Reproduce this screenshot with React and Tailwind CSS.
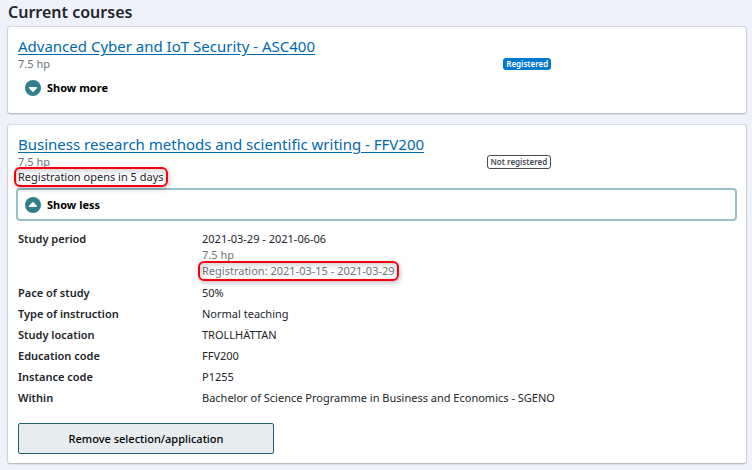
import { useState } from "react";

const courses = [
  {
    name: "Advanced Cyber and IoT Security - ASC400",
    credits: "7.5 hp",
    registered: true,
  },
  {
    name: "Business research methods and scientific writing - FFV200",
    credits: "7.5 hp",
    registered: false,
    notice: "Registration opens in 5 days",
    open: true,
    period: "2021-03-29 - 2021-06-06",
    registration: "Registration: 2021-03-15 - 2021-03-29",
    details: [
      ["Pace of study", "50%"],
      ["Type of instruction", "Normal teaching"],
      ["Study location", "TROLLHÄTTAN"],
      ["Education code", "FFV200"],
      ["Instance code", "P1255"],
      ["Within", "Bachelor of Science Programme in Business and Economics - SGENO"],
    ],
  },
];

function Highlight({ children }) {
  return (
    <span className="relative block w-fit">
      {children}
      <span className="absolute -inset-x-1 -inset-y-0.5 rounded-md border-2 border-[#f5000f] shadow-[1px_2px_5px_rgba(0,0,0,0.25),inset_1px_2px_6px_rgba(0,0,0,0.2)]" />
    </span>
  );
}

function ToggleIcon({ open }) {
  return (
    <svg className="size-4" viewBox="0 0 16 16" aria-hidden="true">
      <circle cx="8" cy="8" r="8" fill="#2f7f8d" />
      <path
        d={open ? "M8 4.8 12.2 9Q12.2 10 11.2 10H4.8Q3.8 10 3.8 9Z" : "M8 12.2 3.8 8Q3.8 7 4.8 7H11.2Q12.2 7 12.2 8Z"}
        fill="#fff"
      />
    </svg>
  );
}

function StatusBadge({ registered }) {
  return registered ? (
    <span className="rounded-[3px] bg-[#007acc] px-[3px] text-[8px] leading-3 font-semibold text-white">
      Registered
    </span>
  ) : (
    <span className="rounded-[3px] border border-[#454b54] px-[3px] text-[8px] leading-3 font-semibold text-[#454b54]">
      Not registered
    </span>
  );
}

function CourseCard({ course }) {
  const [open, setOpen] = useState(Boolean(course.open));

  return (
    <article className="rounded-xs bg-white pt-[9px] pr-[9px] pb-[9px] pl-2 shadow-[0_0_1px_1px_rgba(0,0,0,0.1),0_1px_2px_rgba(0,0,0,0.2)]">
      <div className="pl-0.5">
        <h2 className="text-[15px] leading-5">
          <a href="#" className="text-[#0069b0] underline underline-offset-2">
            {course.name}
          </a>
        </h2>
        <div className="flex h-[15px] w-3/4 items-center justify-between pr-1.5">
          <span className="text-[#6c757d]">{course.credits}</span>
          <StatusBadge registered={course.registered} />
        </div>
        {course.notice && (
          <div className="mb-[3px]">
            <Highlight>{course.notice}</Highlight>
          </div>
        )}
      </div>

      <button
        type="button"
        aria-expanded={open}
        onClick={() => setOpen(!open)}
        className={`flex h-[33px] w-full items-center gap-1.5 rounded-sm border-2 px-[7px] font-bold text-black ${
          open ? "border-[#98c0c6]" : "border-transparent"
        }`}
      >
        <ToggleIcon open={open} />
        {open ? "Show less" : "Show more"}
      </button>

      {open && course.details && (
        <div className="pt-2.5 pl-0.5">
          <dl className="grid grid-cols-[184px_1fr] gap-y-[5px]">
            <dt className="font-semibold">Study period</dt>
            <dd className="pb-px">
              <p>{course.period}</p>
              <p className="text-[#6c757d]">{course.credits}</p>
              <div className="text-[#6c757d]">
                <Highlight>{course.registration}</Highlight>
              </div>
            </dd>
            {course.details.map(([label, value]) => (
              <div key={label} className="contents">
                <dt className="font-semibold">{label}</dt>
                <dd>{value}</dd>
              </div>
            ))}
          </dl>
          <button
            type="button"
            className="mt-[17px] h-[31px] w-64 rounded-xs border border-[#1f5f6b] bg-[#e7edef] font-medium text-black"
          >
            Remove selection/application
          </button>
        </div>
      )}
    </article>
  );
}

function App() {
  return (
    <main className="min-h-screen bg-[#eff2fb] pr-1.5 pb-1.5 pl-2 font-['Noto_Sans',sans-serif] text-[11px] leading-4 text-[#212529]">
      <h1 className="pb-[3px] text-base leading-6 font-semibold">Current courses</h1>
      <div className="flex flex-col gap-3">
        {courses.map((course) => (
          <CourseCard key={course.name} course={course} />
        ))}
      </div>
    </main>
  );
}

export default App;
